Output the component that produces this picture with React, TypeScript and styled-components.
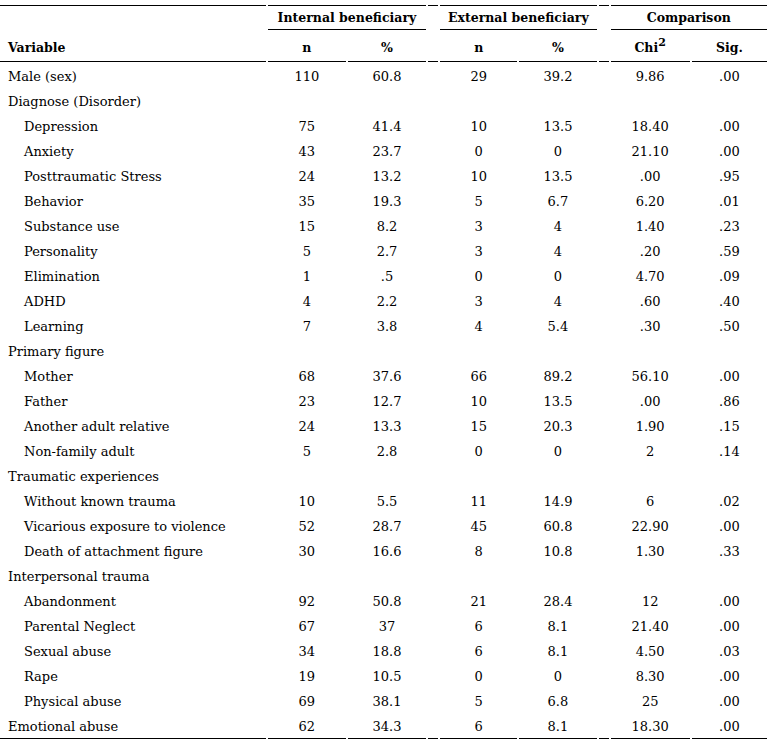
import React from 'react';
import styled, { createGlobalStyle } from 'styled-components';

const GlobalStyle = createGlobalStyle`
  html, body {
    margin: 0;
    padding: 0;
    background: #ffffff;
    color: #000000;
  }
`;

const Page = styled.div`
  padding-top: 5px;
  font-family: 'DejaVu Serif', 'Liberation Serif', serif;
  font-size: 13px;
`;

const Table = styled.table`
  border-collapse: separate;
  border-spacing: 2px 0;
  margin-left: -2px;
  table-layout: fixed;
  width: 771px;
`;

const HeadCell = styled.th<{ top?: boolean; under?: boolean; left?: boolean; tall?: boolean }>`
  padding: ${props => (props.tall ? '3px 0 0' : '0')};
  padding-left: ${props => (props.left ? '8px' : '0')};
  height: ${props => (props.tall ? '28px' : '23px')};
  text-align: ${props => (props.left ? 'left' : 'center')};
  vertical-align: middle;
  font-weight: 700;
  font-size: 12.5px;
  border-top: ${props => (props.top ? '1px solid #000' : 'none')};
  border-bottom: ${props => (props.under ? '1px solid #000' : 'none')};
  white-space: nowrap;
  sup {
    font-size: 11px;
    line-height: 0;
    vertical-align: 6px;
  }
`;

const LabelCell = styled.td<{ sub?: boolean; last?: boolean; first?: boolean }>`
  height: 24px;
  padding: ${props => (props.first ? '2px' : '1px')} 0 0 ${props => (props.sub ? '24px' : '8px')};
  text-align: left;
  vertical-align: middle;
  white-space: nowrap;
  border-bottom: ${props => (props.last ? '1px solid #000' : 'none')};
`;

const NumCell = styled.td<{ last?: boolean; first?: boolean }>`
  height: 24px;
  padding: ${props => (props.first ? '2px' : '1px')} 0 0;
  text-align: center;
  vertical-align: middle;
  white-space: nowrap;
  border-bottom: ${props => (props.last ? '1px solid #000' : 'none')};
`;

type Row = {
  label: string;
  sub?: boolean;
  values?: string[];
};

const rows: Row[] = [
  { label: 'Male (sex)', values: ['110', '60.8', '29', '39.2', '9.86', '.00'] },
  { label: 'Diagnose (Disorder)' },
  { label: 'Depression', sub: true, values: ['75', '41.4', '10', '13.5', '18.40', '.00'] },
  { label: 'Anxiety', sub: true, values: ['43', '23.7', '0', '0', '21.10', '.00'] },
  { label: 'Posttraumatic Stress', sub: true, values: ['24', '13.2', '10', '13.5', '.00', '.95'] },
  { label: 'Behavior', sub: true, values: ['35', '19.3', '5', '6.7', '6.20', '.01'] },
  { label: 'Substance use', sub: true, values: ['15', '8.2', '3', '4', '1.40', '.23'] },
  { label: 'Personality', sub: true, values: ['5', '2.7', '3', '4', '.20', '.59'] },
  { label: 'Elimination', sub: true, values: ['1', '.5', '0', '0', '4.70', '.09'] },
  { label: 'ADHD', sub: true, values: ['4', '2.2', '3', '4', '.60', '.40'] },
  { label: 'Learning', sub: true, values: ['7', '3.8', '4', '5.4', '.30', '.50'] },
  { label: 'Primary figure' },
  { label: 'Mother', sub: true, values: ['68', '37.6', '66', '89.2', '56.10', '.00'] },
  { label: 'Father', sub: true, values: ['23', '12.7', '10', '13.5', '.00', '.86'] },
  { label: 'Another adult relative', sub: true, values: ['24', '13.3', '15', '20.3', '1.90', '.15'] },
  { label: 'Non-family adult', sub: true, values: ['5', '2.8', '0', '0', '2', '.14'] },
  { label: 'Traumatic experiences' },
  { label: 'Without known trauma', sub: true, values: ['10', '5.5', '11', '14.9', '6', '.02'] },
  { label: 'Vicarious exposure to violence', sub: true, values: ['52', '28.7', '45', '60.8', '22.90', '.00'] },
  { label: 'Death of attachment figure', sub: true, values: ['30', '16.6', '8', '10.8', '1.30', '.33'] },
  { label: 'Interpersonal trauma' },
  { label: 'Abandonment', sub: true, values: ['92', '50.8', '21', '28.4', '12', '.00'] },
  { label: 'Parental Neglect', sub: true, values: ['67', '37', '6', '8.1', '21.40', '.00'] },
  { label: 'Sexual abuse', sub: true, values: ['34', '18.8', '6', '8.1', '4.50', '.03'] },
  { label: 'Rape', sub: true, values: ['19', '10.5', '0', '0', '8.30', '.00'] },
  { label: 'Physical abuse', sub: true, values: ['69', '38.1', '5', '6.8', '25', '.00'] },
  { label: 'Emotional abuse', values: ['62', '34.3', '6', '8.1', '18.30', '.00'] },
];

const App = () => {
  return (
    <Page>
      <GlobalStyle />
      <Table>
        <colgroup>
          <col style={{ width: 265 }} />
          <col style={{ width: 78 }} />
          <col style={{ width: 78 }} />
          <col style={{ width: 10 }} />
          <col style={{ width: 77 }} />
          <col style={{ width: 77 }} />
          <col style={{ width: 10 }} />
          <col style={{ width: 79 }} />
          <col style={{ width: 75 }} />
        </colgroup>
        <thead>
          <tr>
            <HeadCell top left />
            <HeadCell top under colSpan={2}>
              Internal beneficiary
            </HeadCell>
            <HeadCell top />
            <HeadCell top under colSpan={2}>
              External beneficiary
            </HeadCell>
            <HeadCell top />
            <HeadCell top under colSpan={2}>
              Comparison
            </HeadCell>
          </tr>
          <tr>
            <HeadCell tall under left>
              Variable
            </HeadCell>
            <HeadCell tall under>n</HeadCell>
            <HeadCell tall under>%</HeadCell>
            <HeadCell tall under />
            <HeadCell tall under>n</HeadCell>
            <HeadCell tall under>%</HeadCell>
            <HeadCell tall under />
            <HeadCell tall under>
              Chi<sup>2</sup>
            </HeadCell>
            <HeadCell tall under>Sig.</HeadCell>
          </tr>
        </thead>
        <tbody>
          {rows.map((row, i) => {
            const last = i === rows.length - 1;
            const first = i === 0;
            const v = row.values || ['', '', '', '', '', ''];
            return (
              <tr key={row.label}>
                <LabelCell sub={row.sub} last={last} first={first}>
                  {row.label}
                </LabelCell>
                <NumCell last={last} first={first}>{v[0]}</NumCell>
                <NumCell last={last} first={first}>{v[1]}</NumCell>
                <NumCell last={last} first={first} />
                <NumCell last={last} first={first}>{v[2]}</NumCell>
                <NumCell last={last} first={first}>{v[3]}</NumCell>
                <NumCell last={last} first={first} />
                <NumCell last={last} first={first}>{v[4]}</NumCell>
                <NumCell last={last} first={first}>{v[5]}</NumCell>
              </tr>
            );
          })}
        </tbody>
      </Table>
    </Page>
  );
};

export default App;
